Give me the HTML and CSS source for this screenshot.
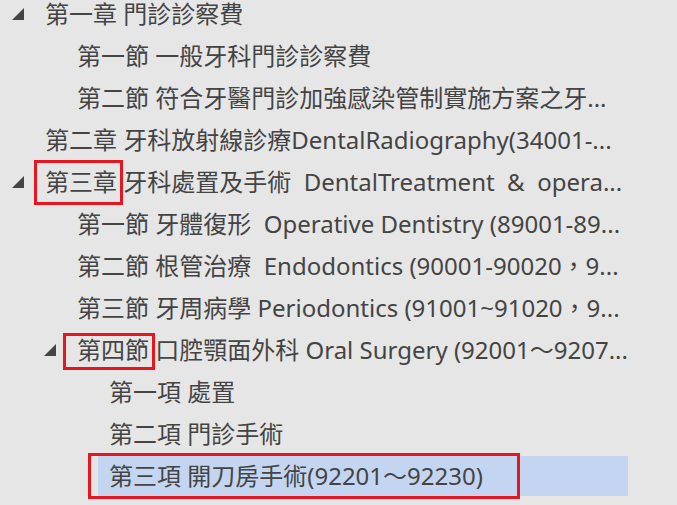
FILE: index.html
```html
<!DOCTYPE html>
<html lang="zh-Hant">
<head>
<meta charset="UTF-8">
<title>牙科處置目錄</title>
<link rel="stylesheet" href="styles.css">
</head>
<body>
<ul class="tree">
  <li class="node lvl-0"><span class="toggle"><svg width="12" height="12" viewBox="0 0 12 12"><polygon points="12,0 12,12 0,12"/></svg></span><span class="label">第一章 門診診察費</span></li>
  <li class="node lvl-1"><span class="toggle"></span><span class="label">第一節 一般牙科門診診察費</span></li>
  <li class="node lvl-1"><span class="toggle"></span><span class="label">第二節 符合牙醫門診加強感染管制實施方案之牙...</span></li>
  <li class="node lvl-0"><span class="toggle"></span><span class="label">第二章 牙科放射線診療DentalRadiography(34001-...</span></li>
  <li class="node lvl-0"><span class="toggle"><svg width="12" height="12" viewBox="0 0 12 12"><polygon points="12,0 12,12 0,12"/></svg></span><span class="label"><span class="mark mark-chapter">第三章</span> 牙科處置及手術  DentalTreatment  &amp;  opera...</span></li>
  <li class="node lvl-1"><span class="toggle"></span><span class="label">第一節 牙體復形  Operative Dentistry (89001-89...</span></li>
  <li class="node lvl-1"><span class="toggle"></span><span class="label">第二節 根管治療  Endodontics (90001-90020，9...</span></li>
  <li class="node lvl-1"><span class="toggle"></span><span class="label">第三節 牙周病學 Periodontics (91001~91020，9...</span></li>
  <li class="node lvl-1"><span class="toggle"><svg width="12" height="12" viewBox="0 0 12 12"><polygon points="12,0 12,12 0,12"/></svg></span><span class="label"><span class="mark mark-section">第四節</span> 口腔顎面外科 Oral Surgery (92001～9207...</span></li>
  <li class="node lvl-2"><span class="toggle"></span><span class="label">第一項 處置</span></li>
  <li class="node lvl-2"><span class="toggle"></span><span class="label">第二項 門診手術</span></li>
  <li class="node lvl-2 selected"><span class="toggle"></span><span class="label"><span class="mark mark-item">第三項 開刀房手術(92201～92230)</span></span></li>
</ul>
</body>
</html>
```
FILE: styles.css
```css
html, body { margin:0; height:100%; overflow:hidden; }
body { background:#e6e6e6; color:#444; font-family:"Noto Sans","Noto Sans CJK TC",sans-serif; font-size:24px; }

.tree { list-style:none; margin:-6px 0 0; padding:0 49px 0 0; }
.node { display:flex; height:40px; margin-bottom:2px; }
.lvl-1 { padding-left:32px; }
.lvl-2 { padding-left:64px; }

.toggle { flex:none; width:34px; display:flex; align-items:center; }
.toggle svg { margin-left:12px; margin-top:-1px; fill:#444; }

.label { flex:1; min-width:0; padding:6px 0 6px 11px; line-height:28px; white-space:pre; }
.selected .label { background:#c3d5f1; }

/* red annotation boxes */
.mark { position:relative; display:inline-block; height:28px; }
.mark::after { content:""; position:absolute; border:3px solid #e5161e; }
.mark-chapter::after { top:-8px; bottom:-9px; left:-11px; right:-6px; }
.mark-section::after { top:-3px; bottom:-6px; left:-14px; right:-6px; }
.mark-item::after { top:-9px; bottom:-9px; left:-21px; right:-37px; }
```
